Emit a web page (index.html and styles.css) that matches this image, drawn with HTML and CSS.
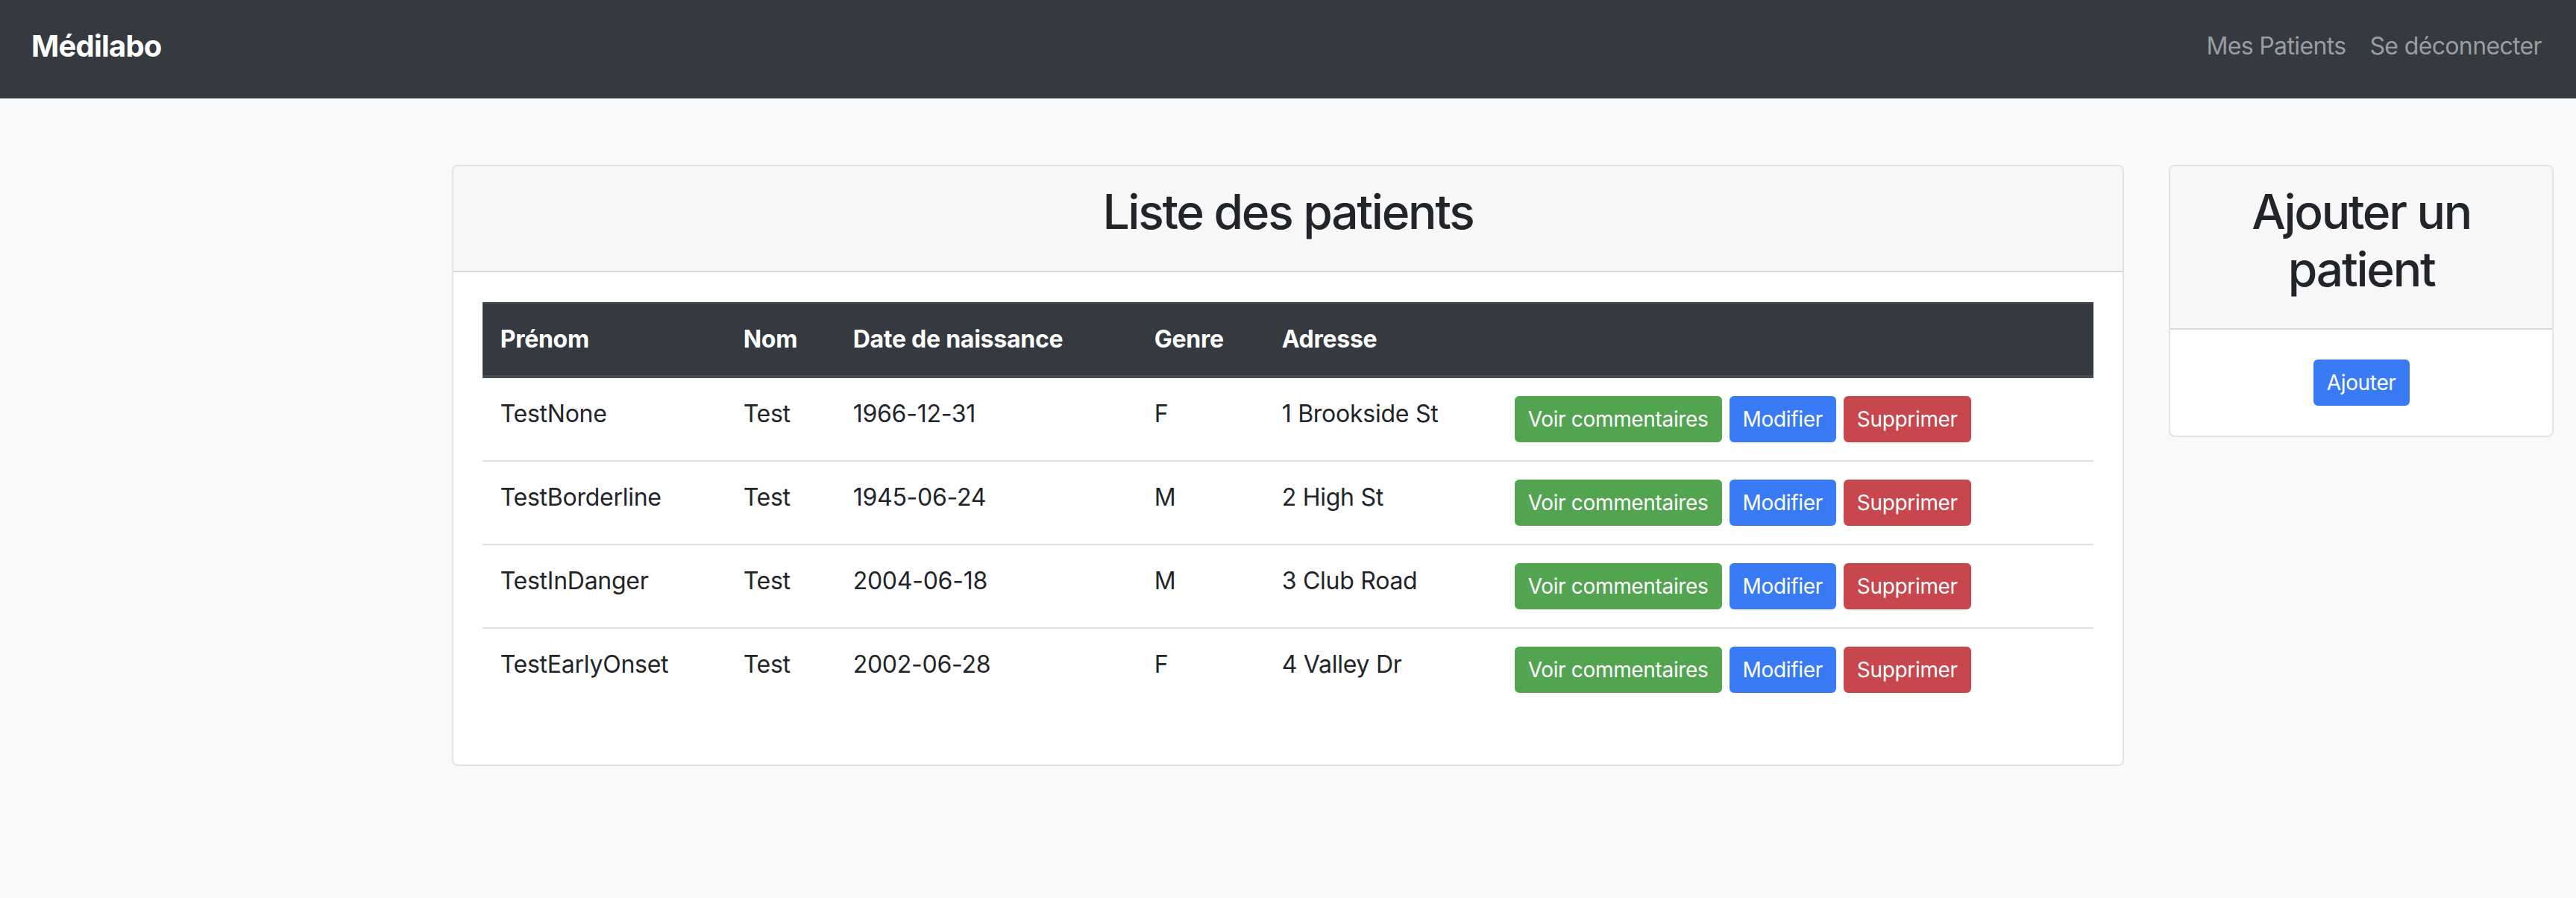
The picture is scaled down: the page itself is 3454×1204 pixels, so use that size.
FILE: index.html
```html
<!DOCTYPE html>
<html lang="fr">
<head>
<meta charset="utf-8">
<title>Médilabo</title>
<link rel="stylesheet" href="styles.css">
</head>
<body>
<nav class="navbar">
  <a class="brand" href="#">Médilabo</a>
  <div class="nav-links">
    <a class="nav-link" href="#">Mes Patients</a>
    <a class="nav-link" href="#">Se déconnecter</a>
  </div>
</nav>
<main class="layout">
  <div class="col-empty"></div>
  <section class="col-main">
    <div class="card">
      <div class="card-header"><h2>Liste des patients</h2></div>
      <div class="card-body">
        <table class="table">
          <thead>
            <tr>
              <th class="w1">Prénom</th>
              <th class="w2">Nom</th>
              <th class="w3">Date de naissance</th>
              <th class="w4">Genre</th>
              <th class="w5">Adresse</th>
              <th></th>
            </tr>
          </thead>
          <tbody>
            <tr>
              <td>TestNone</td><td>Test</td><td>1966-12-31</td><td>F</td><td>1 Brookside St</td>
              <td><div class="actions"><a class="btn btn-success" href="#">Voir commentaires</a><a class="btn btn-primary" href="#">Modifier</a><a class="btn btn-danger" href="#">Supprimer</a></div></td>
            </tr>
            <tr>
              <td>TestBorderline</td><td>Test</td><td>1945-06-24</td><td>M</td><td>2 High St</td>
              <td><div class="actions"><a class="btn btn-success" href="#">Voir commentaires</a><a class="btn btn-primary" href="#">Modifier</a><a class="btn btn-danger" href="#">Supprimer</a></div></td>
            </tr>
            <tr>
              <td>TestInDanger</td><td>Test</td><td>2004-06-18</td><td>M</td><td>3 Club Road</td>
              <td><div class="actions"><a class="btn btn-success" href="#">Voir commentaires</a><a class="btn btn-primary" href="#">Modifier</a><a class="btn btn-danger" href="#">Supprimer</a></div></td>
            </tr>
            <tr>
              <td>TestEarlyOnset</td><td>Test</td><td>2002-06-28</td><td>F</td><td>4 Valley Dr</td>
              <td><div class="actions"><a class="btn btn-success" href="#">Voir commentaires</a><a class="btn btn-primary" href="#">Modifier</a><a class="btn btn-danger" href="#">Supprimer</a></div></td>
            </tr>
          </tbody>
        </table>
      </div>
    </div>
  </section>
  <aside class="col-side">
    <div class="card">
      <div class="card-header"><h2>Ajouter un patient</h2></div>
      <div class="card-body center">
        <a class="btn btn-primary" href="#">Ajouter</a>
      </div>
    </div>
  </aside>
</main>
</body>
</html>
```

FILE: styles.css
```css
* { box-sizing: border-box; }

html, body {
  margin: 0;
  padding: 0;
}

body {
  background: #f8f9fa;
  color: #212529;
  font-family: "Inter", "Noto Sans", "Liberation Sans", sans-serif;
  font-size: 32px;
  line-height: 1.5;
  min-height: 1204px;
}

a { text-decoration: none; }

/* Navbar */
.navbar {
  height: 132px;
  background: #343a40;
  display: flex;
  align-items: center;
  justify-content: space-between;
  padding: 0 46px 8px 42px;
}

.brand {
  color: #ffffff;
  font-size: 40px;
  font-weight: 700;
  line-height: 60px;
  letter-spacing: -0.02em;
}

.nav-links {
  display: flex;
  align-items: center;
}

.nav-link {
  color: #9a9da1;
  font-size: 32px;
  line-height: 48px;
  padding: 0 16px;
  letter-spacing: -0.02em;
}

.nav-link:last-child { padding-right: 0; }

/* Layout */
.layout {
  display: grid;
  grid-template-columns: 1fr 4fr 1fr;
  padding-top: 89px;
}

.col-main, .col-side {
  padding: 0 30px;
}

/* Card */
.card {
  background: #ffffff;
  border: 2px solid #e2e3e4;
  border-radius: 8px;
  overflow: hidden;
}

.card-header {
  background: #f7f7f7;
  border-bottom: 2px solid #dadada;
  padding: 23px 40px 24px;
  text-align: center;
}

.card-header h2 {
  margin: 0 0 16px;
  font-size: 64px;
  font-weight: 500;
  line-height: 1.2;
  letter-spacing: -0.035em;
  color: #212529;
}

.card-body {
  padding: 40px 39px;
}

.card-body.center {
  text-align: center;
}

/* Table */
.table {
  width: 100%;
  border-collapse: collapse;
  table-layout: fixed;
  margin-bottom: 32px;
}

.table th,
.table td {
  padding: 24px;
  text-align: left;
  line-height: 48px;
  font-size: 32px;
  letter-spacing: -0.008em;
}

.table th {
  background: #343a40;
  color: #ffffff;
  font-weight: 700;
  border-top: 2px solid #454d55;
  border-bottom: 4px solid #454d55;
  vertical-align: bottom;
}

.table td {
  border-top: 2px solid #dee2e6;
  vertical-align: top;
  white-space: nowrap;
}

.w1 { width: 326px; }
.w2 { width: 147px; }
.w3 { width: 404px; }
.w4 { width: 171px; }
.w5 { width: 312px; }

.actions {
  display: flex;
  gap: 10px;
}

/* Buttons */
.btn {
  display: inline-block;
  font-size: 28px;
  line-height: 42px;
  padding: 8px 16px;
  border: 2px solid transparent;
  border-radius: 6px;
  color: #ffffff;
  white-space: nowrap;
  letter-spacing: -0.012em;
}

.btn-success { background: #53a451; border-color: #53a451; }
.btn-primary { background: #387bf5; border-color: #387bf5; }
.btn-danger  { background: #c8464d; border-color: #c8464d; }
```
